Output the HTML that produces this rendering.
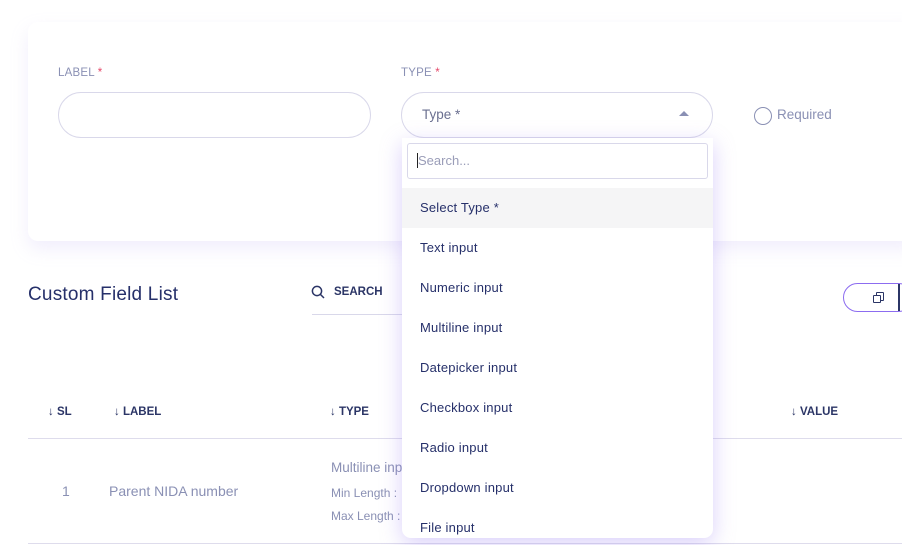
<!DOCTYPE html>
<html><head><style>
*{margin:0;padding:0;box-sizing:border-box}
body{width:902px;height:545px;overflow:hidden;background:#fff;font-family:"Liberation Sans",sans-serif;position:relative;color:#2b3566}
.abs{position:absolute}
.card{left:28px;top:22px;width:890px;height:219px;background:#fff;border-radius:10px;box-shadow:0 8px 18px rgba(180,160,240,.18)}
.lbl{font-size:11.5px;color:#8a90b4;letter-spacing:.2px}
.lbl b{color:#e5486a;font-weight:normal}
.inp{border:1px solid #d9d8ea;border-radius:23px;height:46px;background:#fff}
.dd{left:402px;top:138px;width:311px;height:400px;background:#fff;border-radius:0 0 9px 9px;box-shadow:0 6px 22px rgba(150,120,240,.35);overflow:hidden}
.item{height:40px;line-height:40px;padding-left:18px;font-size:13px;color:#26306a;letter-spacing:.2px}
.th{top:406px;font-size:11.5px;font-weight:bold;color:#2b3566}
.muted{color:#8a90b4}
</style></head><body>
<div class="abs card"></div>
<div class="abs lbl" style="left:58px;top:67px">LABEL <b>*</b></div>
<div class="abs inp" style="left:58px;top:92px;width:313px"></div>
<div class="abs lbl" style="left:401px;top:67px">TYPE <b>*</b></div>
<div class="abs inp" style="left:401px;top:92px;width:312px"></div>
<div class="abs" style="left:422px;top:107px;font-size:13.5px;color:#6a6f90">Type *</div>
<div class="abs" style="left:679px;top:111px;width:0;height:0;border-left:5px solid transparent;border-right:5px solid transparent;border-bottom:5px solid #8a90b4"></div>
<div class="abs" style="left:754px;top:107px;width:18px;height:18px;border:1.5px solid #8a90b4;border-radius:50%"></div>
<div class="abs" style="left:777px;top:107px;font-size:13.5px;color:#8a90b4">Required</div>

<div class="abs" style="left:28px;top:284px;font-size:19px;color:#26306a;letter-spacing:.2px">Custom Field List</div>
<svg class="abs" style="left:311px;top:285px" width="14" height="14" viewBox="0 0 14 14"><circle cx="6" cy="6" r="4.6" fill="none" stroke="#2b3566" stroke-width="1.5"/><path d="M9.5 9.5L13 13" stroke="#2b3566" stroke-width="1.5"/></svg>
<div class="abs" style="left:334px;top:286px;font-size:11.5px;font-weight:bold;color:#2b3566">SEARCH</div>
<div class="abs" style="left:312px;top:314px;width:92px;height:1px;background:#d9d8ea"></div>
<div class="abs" style="left:843px;top:283px;width:70px;height:29px;border:1.5px solid #8c6cf0;border-radius:15px;background:#fff"></div>
<div class="abs" style="left:876px;top:292px;width:8px;height:9px;border:1.3px solid #2b3566;border-radius:1px"></div>
<div class="abs" style="left:873px;top:295px;width:8px;height:8px;border:1.3px solid #2b3566;border-radius:1px;background:#fff"></div>
<div class="abs" style="left:898px;top:284px;width:1.5px;height:27px;background:#2b3566"></div>

<div class="abs th" style="left:48px">↓ SL</div>
<div class="abs th" style="left:114px">↓ LABEL</div>
<div class="abs th" style="left:330px">↓ TYPE</div>
<div class="abs th" style="left:791px">↓ VALUE</div>
<div class="abs" style="left:28px;top:438px;width:874px;height:1px;background:#dedcec"></div>
<div class="abs muted" style="left:62px;top:483px;font-size:14px">1</div>
<div class="abs muted" style="left:109px;top:483px;font-size:14px">Parent NIDA number</div>
<div class="abs muted" style="left:331px;top:460px;font-size:13.5px">Multiline input</div>
<div class="abs muted" style="left:331px;top:486px;font-size:12px">Min Length :</div>
<div class="abs muted" style="left:331px;top:509px;font-size:12px">Max Length :</div>
<div class="abs" style="left:28px;top:543px;width:874px;height:1px;background:#dedcec"></div>

<div class="abs dd">
 <div style="margin:5px 5px 9px;height:36px;border:1px solid #d9d8ea;border-radius:3px;padding:9px 9px;font-size:13px;color:#9a9db8"><span style="border-left:1px solid #222">Search...</span></div>
 <div class="item" style="background:#f5f5f6">Select Type *</div>
 <div class="item">Text input</div>
 <div class="item">Numeric input</div>
 <div class="item">Multiline input</div>
 <div class="item">Datepicker input</div>
 <div class="item">Checkbox input</div>
 <div class="item">Radio input</div>
 <div class="item">Dropdown input</div>
 <div class="item">File input</div>
</div>
</body></html>
